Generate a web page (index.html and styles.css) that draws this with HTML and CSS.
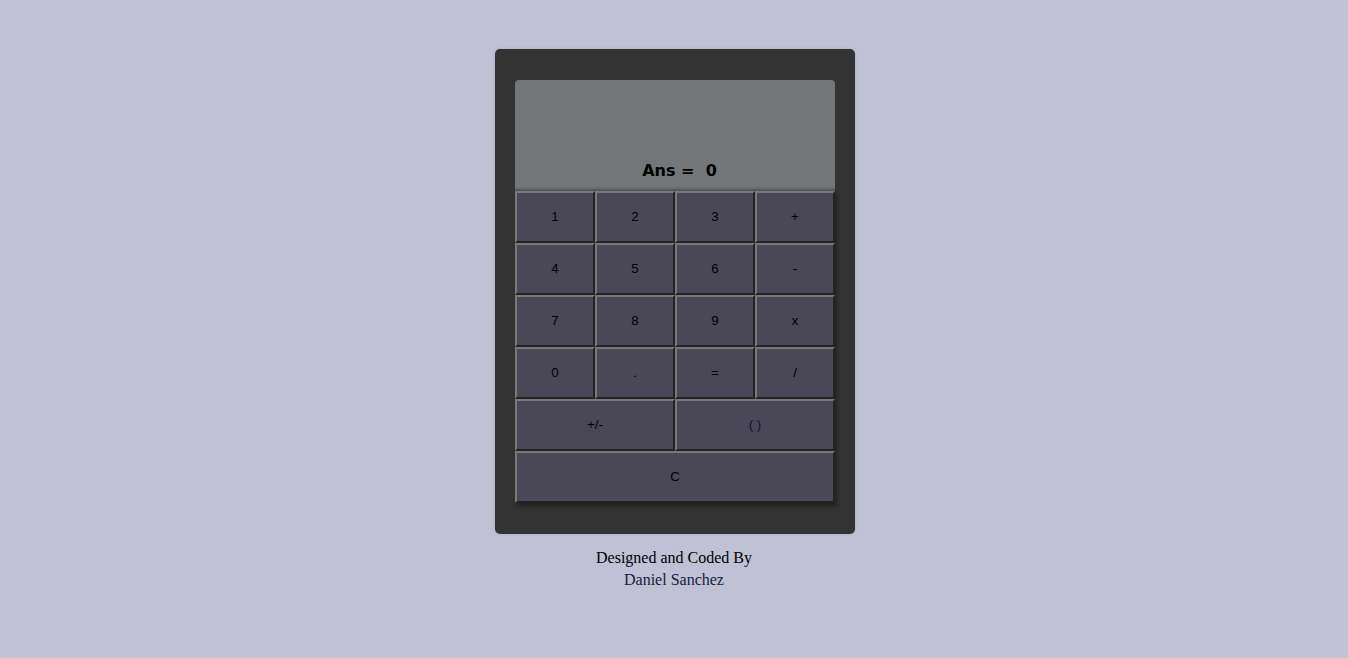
FILE: index.html
```
<!DOCTYPE html>
<html>
<head>
<meta charset="utf-8">
<link rel="stylesheet" href="styles.css">
</head>
<body>
<main class="page">
  <div class="calc">
    <div class="display"><span class="ans">Ans =&nbsp; 0</span></div>
    <div class="keys">
      <button class="key">1</button>
      <button class="key">2</button>
      <button class="key">3</button>
      <button class="key">+</button>
      <button class="key">4</button>
      <button class="key">5</button>
      <button class="key">6</button>
      <button class="key">-</button>
      <button class="key">7</button>
      <button class="key">8</button>
      <button class="key">9</button>
      <button class="key">x</button>
      <button class="key">0</button>
      <button class="key">.</button>
      <button class="key">=</button>
      <button class="key">/</button>
      <button class="key span2">+/-</button>
      <button class="key span2 paren">( )</button>
      <button class="key span4">C</button>
    </div>
  </div>
  <footer class="credit">
    <div>Designed and Coded By</div>
    <div class="author">Daniel Sanchez</div>
  </footer>
</main>
</body>
</html>
```
FILE: styles.css
```
html, body {
  margin: 0;
  padding: 0;
  height: 100%;
}
body {
  background: #c1c1d6;
  font-family: "Liberation Serif", serif;
  overflow: hidden;
}
.page {
  display: flex;
  flex-direction: column;
  align-items: center;
  padding-top: 49px;
}
.calc {
  width: 320px;
  height: 423px;
  padding: 31px 20px;
  background: #333333;
  border-radius: 5px;
  box-shadow: 0 0 3px rgba(0,0,0,0.15);
  display: flex;
  flex-direction: column;
  margin-left: 2px;
}
.display {
  height: 111px;
  background: #737779;
  border-radius: 4px 4px 0 0;
  display: flex;
  align-items: flex-end;
  justify-content: center;
  padding-bottom: 11px;
  box-sizing: border-box;
  box-shadow: inset 0 -4px 3px -2px rgba(40,40,45,0.45);
}
.ans {
  font-family: "DejaVu Sans", sans-serif;
  font-weight: bold;
  font-size: 16px;
  color: #000;
  margin-left: 9px;
}
.keys {
  display: grid;
  grid-template-columns: repeat(4, 80px);
  grid-auto-rows: 52px;
  box-shadow: 2px 3px 4px rgba(0,0,0,0.35);
}
.key {
  margin: 0;
  padding: 0 0 2px 0;
  background: #4a4757;
  border: 2px solid;
  border-color: #787878 #232325 #232325 #787878;
  color: #000;
  font-family: "Liberation Sans", Arial, sans-serif;
  font-size: 13.33px;
}
.span2 { grid-column: span 2; }
.span4 { grid-column: span 4; }
.paren { color: #0c1530; }
.credit {
  margin-top: 13px;
  text-align: center;
  font-size: 16px;
  line-height: 22px;
  color: #000;
}
.author { color: #14203e; }
```
